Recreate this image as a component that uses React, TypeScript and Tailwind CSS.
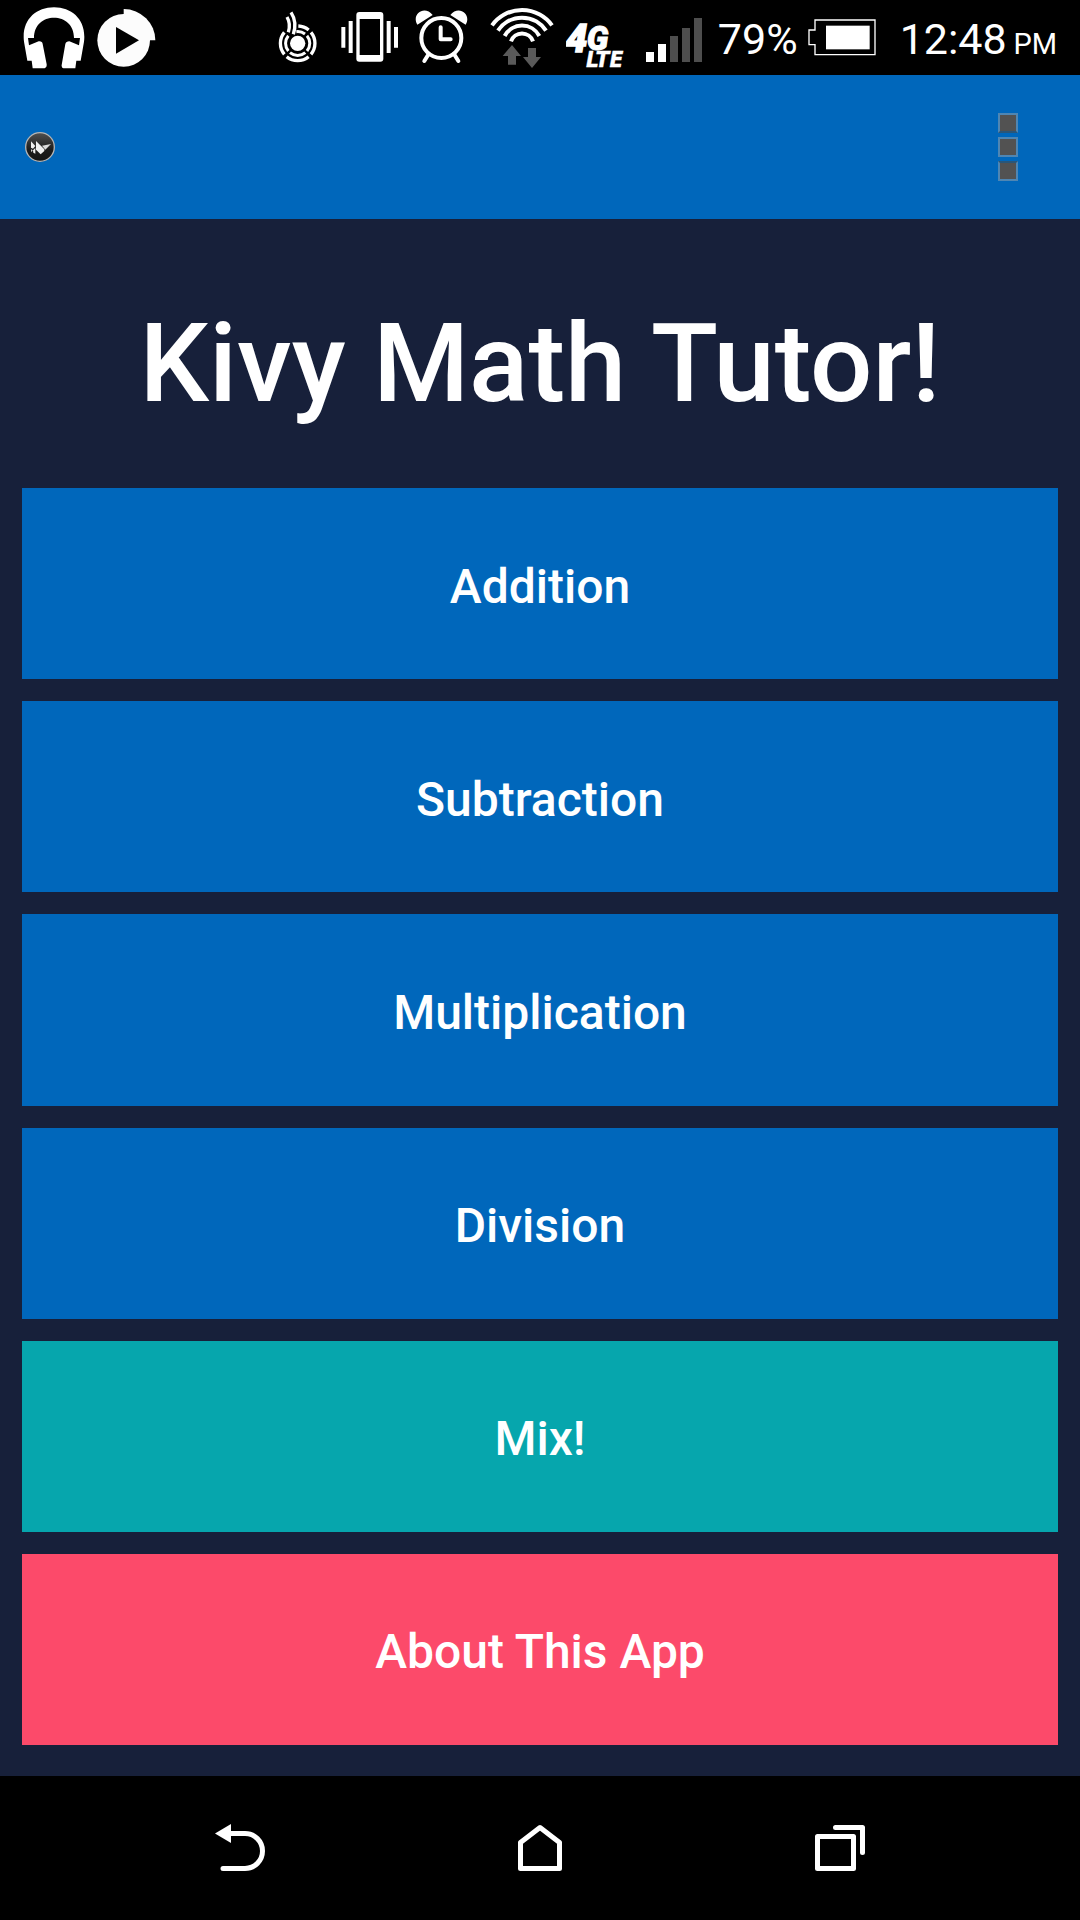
import React from "react";

const icon = "h-full shrink-0";

function Headphones() {
  return (
    <svg className={`${icon} w-[62px]`} viewBox="69 0 186 225" fill="#fff" aria-hidden="true">
      <path d="M98 205L95 182H82L72 125C64 62 106 22 162 22C218 22 260 62 252 125L242 182H229L226 205H190Q184 203 185 195L196 132Q198 124 208 124L237 136L240 114H222C222 74 194 53 162 53C130 53 102 74 102 114H84L87 136L116 124Q127 123 128 132L140 193Q141 203 134 205Z" />
    </svg>
  );
}

function PlayDisc() {
  return (
    <svg className={`${icon} w-[59px]`} viewBox="290 0 177 225" fill="#fcfcfc" aria-hidden="true">
      <circle cx="370" cy="121" r="79" />
      <path d="M370 27A95 94 0 0 1 465 121H370Z" />
      <path d="M347 81L416 121L347 161Z" fill="#000" />
    </svg>
  );
}

function Beats() {
  return (
    <svg className={`${icon} w-[39px]`} viewBox="55 0 117 225" fill="none" stroke="#fff" aria-hidden="true">
      <circle cx="114" cy="130" r="23" fill="#fff" stroke="none" />
      <path strokeWidth="10" d="M154 97A52 52 0 0 1 154 163M147 170A52 52 0 0 1 81 170M74 163A52 52 0 0 1 74 97M116 78A52 52 0 0 1 147 90" />
      <path strokeWidth="9" d="M142 107A36 36 0 0 1 142 153M137 158A36 36 0 0 1 91 158M86 153A36 36 0 0 1 86 107M110 95A36 36 0 0 1 136 102" />
      <path strokeWidth="10" d="M94 37Q113 66 101 103M82 51Q94 72 86 97" />
    </svg>
  );
}

function Vibrate() {
  return (
    <svg className={`${icon} w-[58px]`} viewBox="244 0 174 225" fill="#fff" aria-hidden="true">
      <rect x="290" y="36" width="81" height="149" rx="9" />
      <rect x="300" y="57" width="61" height="108" fill="#000" />
      <path d="M245 81h12v62h-12zM267 63h12v96h-12zM381 63h12v96h-12zM403 81h12v62h-12z" />
    </svg>
  );
}

function Alarm() {
  return (
    <svg className={`${icon} w-[53px]`} viewBox="467 0 159 225" fill="none" stroke="#fff" strokeLinecap="round" strokeLinejoin="round" aria-hidden="true">
      <circle cx="546" cy="114" r="60" strokeWidth="12" />
      <path strokeWidth="12" d="M544 82V118H574M508 162L495 183M584 162L597 183" />
      <path fill="#fff" stroke="none" d="M474 74C455 42 496 14 520 45ZM619 74C638 42 597 14 573 45Z" />
    </svg>
  );
}

function Wifi() {
  return (
    <svg className={`${icon} w-[64px]`} viewBox="60 0 192 225" fill="none" aria-hidden="true">
      <path stroke="#fff" strokeWidth="12" d="M66 76A111 111 0 0 1 246 76M84 92A86 86 0 0 1 228 92M104 108A59 59 0 0 1 208 108M123 124A35 35 0 0 1 189 124" />
      <path fill="#5a5a5a" d="M126 135L153 168H138V194H114V168H98ZM174 144H198V171H213L186 204L159 171H174Z" />
    </svg>
  );
}

function FourG() {
  return (
    <svg className={`${icon} w-[60px]`} viewBox="288 0 180 225" fill="#fff" stroke="#fff" strokeWidth="1" fontWeight="900" fontStyle="italic" role="img" aria-label="4G LTE">
      <text fontFamily="Roboto, sans-serif">
        <tspan x="287" y="156" fontSize="116" strokeWidth="4">4</tspan>
        <tspan x="350" y="151" fontSize="98" strokeWidth="3">G</tspan>
        <tspan x="348" y="202" fontSize="61" fontFamily="DejaVu Sans, sans-serif">LTE</tspan>
      </text>
    </svg>
  );
}

function Signal() {
  return (
    <svg className={`${icon} w-[56px]`} viewBox="528 0 168 225" aria-hidden="true">
      <path fill="#fff" d="M528 156h24v30h-24zM564 132h24v54h-24z" />
      <path fill="#4e4e4e" d="M600 108h24v78h-24zM636 84h24v102h-24zM672 54h24v132h-24z" />
    </svg>
  );
}

function Battery() {
  return (
    <svg className={`${icon} w-[68px]`} viewBox="321 0 204 225" aria-hidden="true">
      <path fill="none" stroke="#fff" strokeWidth="4" d="M342 60H522V164H342V134H324V90H342Z" />
      <rect x="375" y="77" width="131" height="71" fill="#fff" />
    </svg>
  );
}

function KivyLogo() {
  return (
    <svg className="h-[30px] w-[30px]" viewBox="75 96 90 90" aria-hidden="true">
      <defs>
        <linearGradient id="disc" x1="0" y1="0" x2="0" y2="1">
          <stop offset="0" stopColor="#505050" />
          <stop offset="0.6" stopColor="#1c1c1c" />
          <stop offset="1" stopColor="#141414" />
        </linearGradient>
      </defs>
      <circle cx="120" cy="141" r="43" fill="url(#disc)" stroke="#b4b4b4" strokeWidth="4" />
      <path fill="#f0f0f0" d="M93 124L106 138L99 146L93 143ZM93 148L98 151L94 157ZM99 151L106 144V161L100 158ZM108 123L133 148V153L122 163L108 149Z" />
      <path fill="#dcdcdc" d="M126 137L153 132L136 149Z" />
    </svg>
  );
}

const choices = [
  { label: "Addition", color: "bg-[#0067bb]" },
  { label: "Subtraction", color: "bg-[#0067bb]" },
  { label: "Multiplication", color: "bg-[#0067bb]" },
  { label: "Division", color: "bg-[#0067bb]" },
  { label: "Mix!", color: "bg-[#06a6ad]" },
  { label: "About This App", color: "bg-[#fc4a6a]" },
];

const navIcon = "h-12 w-[52px]";

export default function App() {
  return (
    <div className="flex min-h-screen flex-col bg-[#17203a] font-['Roboto',sans-serif] text-white">
      <div className="flex h-[75px] items-center justify-between bg-black px-[23px]">
        <div className="flex h-full gap-3">
          <Headphones />
          <PlayDisc />
        </div>
        <div className="flex h-full items-center">
          <div className="flex h-full gap-6">
            <Beats />
            <Vibrate />
          </div>
          <div className="ml-4 flex h-full gap-[22px]">
            <Alarm />
            <Wifi />
          </div>
          <div className="ml-3 flex h-full gap-5">
            <FourG />
            <Signal />
          </div>
          <span className="ml-4 pt-1 text-[43px] leading-none">79%</span>
          <div className="ml-2.5 h-full">
            <Battery />
          </div>
          <span className="ml-6 whitespace-nowrap pt-1 text-[43px] leading-none">
            12:48 <span className="-ml-1 text-[29px]">PM</span>
          </span>
        </div>
      </div>

      <header className="flex h-36 items-center justify-between bg-[#0067bb] pl-[25px] pr-[62px]">
        <KivyLogo />
        <button type="button" aria-label="Menu" className="flex flex-col gap-1">
          <span className="h-5 w-5 border-2 border-[#4f86b3] border-b-[#2a5678] bg-[#525252]" />
          <span className="h-5 w-5 border-2 border-[#4f86b3] bg-[#525252]" />
          <span className="h-5 w-5 border-2 border-[#4f86b3] border-t-[#2a5678] bg-[#525252]" />
        </button>
      </header>

      <main className="flex flex-1 flex-col px-[22px] pb-[31px]">
        <h1 className="flex h-[269px] items-center justify-center pt-5 text-center text-[110px] font-medium leading-none">
          Kivy Math Tutor!
        </h1>
        <div className="flex flex-1 flex-col gap-[22px]">
          {choices.map(({ label, color }) => (
            <button key={label} type="button" className={`min-h-24 flex-1 pt-1.5 text-[48px] font-medium leading-none ${color}`}>
              {label}
            </button>
          ))}
        </div>
      </main>

      <nav className="grid h-36 grid-cols-3 bg-black px-[90px]">
        <button type="button" aria-label="Back" className="flex items-center justify-center">
          <svg className={navIcon} viewBox="0 0 52 48" fill="none" aria-hidden="true">
            <path stroke="#fff" strokeWidth="5" strokeLinecap="round" d="M14 9.500H31A17.500 17.500 0 0 1 31 44.500H9" />
            <path fill="#fff" d="M1 9.500L17 0V19Z" />
          </svg>
        </button>
        <button type="button" aria-label="Home" className="flex items-center justify-center">
          <svg className={navIcon} viewBox="0 0 52 48" fill="none" aria-hidden="true">
            <path stroke="#fff" strokeWidth="5" strokeLinejoin="round" d="M6.500 18.500L26 3.500L45.500 18.500V44.500H6.500Z" />
          </svg>
        </button>
        <button type="button" aria-label="Recent apps" className="flex items-center justify-center">
          <svg className={navIcon} viewBox="0 0 52 48" fill="none" stroke="#fff" strokeWidth="5" strokeLinecap="round" strokeLinejoin="round" aria-hidden="true">
            <path d="M3.500 12.500H39.500V44.500H3.500ZM21.500 3.500H48.500V28.500" />
          </svg>
        </button>
      </nav>
    </div>
  );
}
